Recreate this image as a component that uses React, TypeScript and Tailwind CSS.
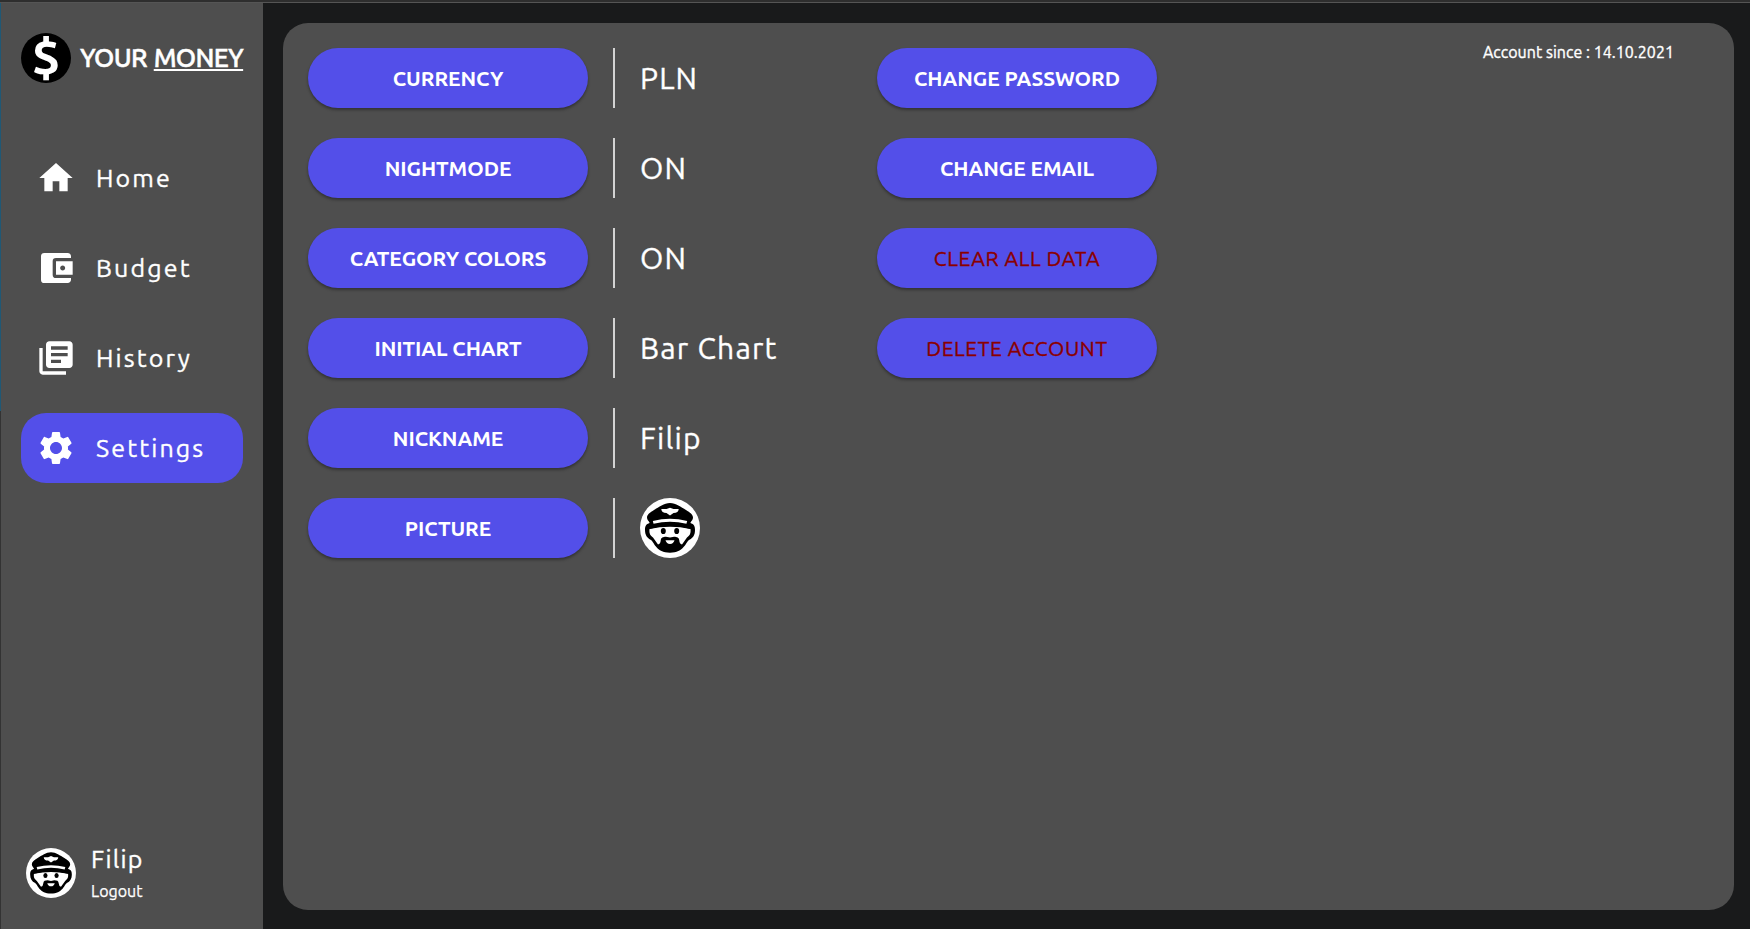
import type { IconType } from 'react-icons';
import { MdAccountBalanceWallet, MdHome, MdLibraryBooks, MdSettings } from 'react-icons/md';

const navItems: { label: string; Icon: IconType; active?: boolean }[] = [
  { label: 'Home', Icon: MdHome },
  { label: 'Budget', Icon: MdAccountBalanceWallet },
  { label: 'History', Icon: MdLibraryBooks },
  { label: 'Settings', Icon: MdSettings, active: true },
];

const preferences = [
  { label: 'CURRENCY', value: 'PLN' },
  { label: 'NIGHTMODE', value: 'ON' },
  { label: 'CATEGORY COLORS', value: 'ON' },
  { label: 'INITIAL CHART', value: 'Bar Chart' },
  { label: 'NICKNAME', value: 'Filip' },
  { label: 'PICTURE', value: null },
];

const accountActions = [
  { label: 'CHANGE PASSWORD', danger: false },
  { label: 'CHANGE EMAIL', danger: false },
  { label: 'CLEAR ALL DATA', danger: true },
  { label: 'DELETE ACCOUNT', danger: true },
];

function Avatar({ className }: { className: string }) {
  return (
    <svg viewBox="0 0 60 60" className={className} aria-hidden="true">
      <circle cx="30" cy="30" r="30" fill="#fff" />
      {/* head and beard outline */}
      <path
        d="M10 25C5.500 26 5 29 5 32C5 37 7 40 11 42C14 44 16 54.700 30 54.700C44 54.700 46 44 49 42C53 40 55 37 55 32C55 29 54.500 26 50 25Z"
        fill="#000"
      />
      {/* face */}
      <path
        d="M9.500 31Q30 26.500 50.500 31C51 36 49.500 37.500 47 39.500L42 46.500Q39.500 46 39.300 42.500C39 39.500 37 38.800 34 38.800L30 39.600L26 38.800C23 38.800 21 39.500 20.700 42.500Q20.500 46 18 46.500L13 39.500C10.500 37.500 9 36 9.500 31Z"
        fill="#fff"
      />
      <ellipse cx="23.300" cy="33" rx="2.500" ry="3.100" fill="#000" />
      <ellipse cx="36.700" cy="33" rx="2.500" ry="3.100" fill="#000" />
      <path d="M25.500 42.300H34.500Q33.500 46 30 46Q26.500 46 25.500 42.300Z" fill="#fff" />
      {/* cap */}
      <path
        d="M30 5C36 5 41 9 46 12C50 14.500 53 16.500 53 19.500C53 21.500 51.500 23 50.500 24.500V31Q30 24.500 9.500 31V24.500C8.500 23 7 21.500 7 19.500C7 16.500 10 14.500 14 12C19 9 24 5 30 5Z"
        fill="#000"
      />
      <path d="M13.200 24.400Q30 20 46.800 24.400" fill="none" stroke="#fff" strokeWidth="3" />
      <path
        d="M21.300 11H26.500L30 9.700L33.500 11H38.700Q38.500 15 33.500 15L30 17.500L26.500 15Q21.500 15 21.300 11Z"
        fill="#fff"
      />
    </svg>
  );
}

function Sidebar() {
  return (
    <aside className="flex w-[262px] shrink-0 flex-col bg-[#4e4e4e] px-5">
      <div className="mt-[30px] flex h-[50px] items-center gap-[9px]">
        <div className="flex size-[50px] shrink-0 items-center justify-center rounded-full bg-black pb-1">
          <span className="text-[50px] leading-[46px] font-bold">$</span>
        </div>
        <h1 className="text-[26px] leading-[30px] font-medium tracking-[-0.7px] [word-spacing:1.5px] whitespace-nowrap [-webkit-text-stroke:0.5px]">
          YOUR <span className="underline decoration-2 underline-offset-[2px]">MONEY</span>
        </h1>
      </div>

      <nav className="mt-[60px] flex flex-col gap-5">
        {navItems.map(({ label, Icon, active }) => (
          <a
            key={label}
            className={`flex h-[70px] items-center gap-5 rounded-[25px] pl-[15px] ${active ? 'bg-[#534fe9]' : ''}`}
          >
            <Icon className="size-10" />
            <span className="text-[25px] leading-7 tracking-[2.15px] [-webkit-text-stroke:0.35px]">{label}</span>
          </a>
        ))}
      </nav>

      <div className="mt-auto mb-[28px] flex items-center gap-[15px] pl-[5px]">
        <Avatar className="size-[50px]" />
        <div className="flex flex-col">
          <span className="text-[25px] leading-7 tracking-[1.25px] [-webkit-text-stroke:0.35px]">Filip</span>
          <span className="mt-2 text-base leading-5 [-webkit-text-stroke:0.25px]">Logout</span>
        </div>
      </div>
    </aside>
  );
}

function PillButton({ label, danger = false }: { label: string; danger?: boolean }) {
  return (
    <button
      className={`h-[60px] w-[280px] rounded-full bg-[#534fe9] pt-0.5 text-[21px] shadow-[0_2px_3px_rgba(0,0,0,0.35)] ${
        danger
          ? 'font-normal tracking-[0.57px] text-[#8b0000] [-webkit-text-stroke:0.35px]'
          : 'font-bold tracking-[-0.08px]'
      }`}
    >
      {label}
    </button>
  );
}

export default function App() {
  return (
    <div className="flex h-screen flex-col overflow-hidden bg-[#191a1b] font-['Ubuntu','Noto_Sans',sans-serif] text-white">
      <div className="h-[3px] shrink-0 border-b border-[#555555] bg-[#2e2e2e]" />
      <div className="flex min-h-0 flex-1">
        <div className="flex w-px shrink-0 flex-col bg-[#333333]">
          <div className="h-[408px] bg-[#1f5875]" />
        </div>
        <Sidebar />
        <main className="mt-5 mr-4 mb-[19px] ml-5 flex flex-1 items-start rounded-[25px] bg-[#4e4e4e] p-[25px]">
          <div className="flex w-[569px] flex-col gap-[30px]">
            {preferences.map(({ label, value }) => (
              <div key={label} className="flex h-[60px] items-center">
                <PillButton label={label} />
                <div className="ml-[25px] h-full w-0.5 bg-[#d3d3d3]" />
                <div className="ml-[25px] text-[30px] leading-9 tracking-[1.2px] [-webkit-text-stroke:0.35px]">
                  {value ?? <Avatar className="size-[60px]" />}
                </div>
              </div>
            ))}
          </div>
          <div className="flex flex-col gap-[30px]">
            {accountActions.map(({ label, danger }) => (
              <PillButton key={label} label={label} danger={danger} />
            ))}
          </div>
          <p className="mr-[35px] ml-auto text-base leading-2 tracking-[0.03px] [-webkit-text-stroke:0.35px]">
            Account since : 14.10.2021
          </p>
        </main>
      </div>
    </div>
  );
}
